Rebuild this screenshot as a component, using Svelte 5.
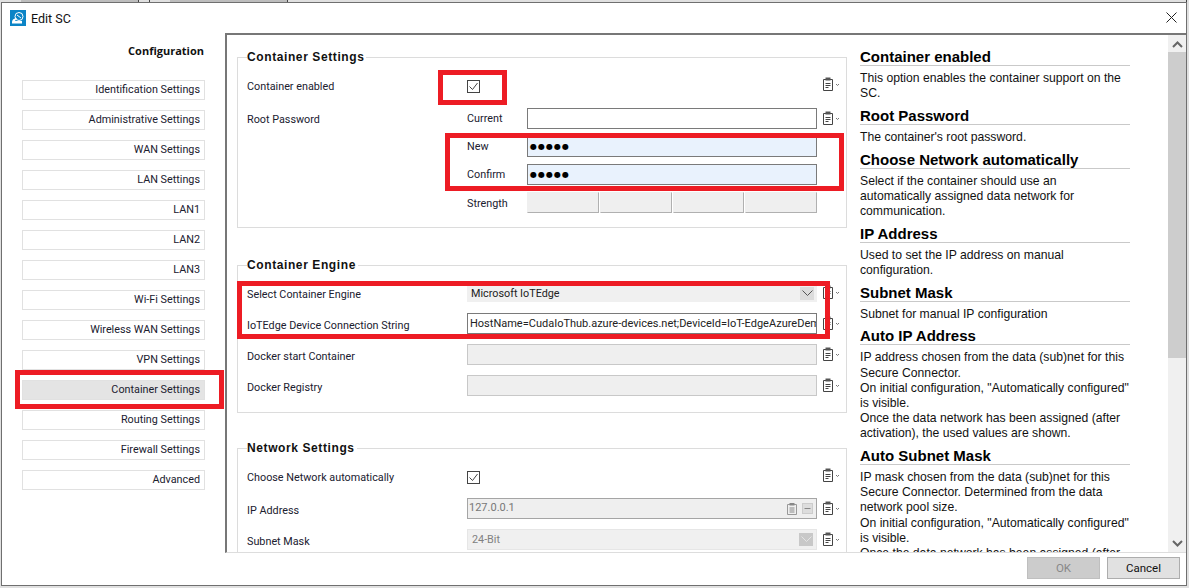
<script lang="ts">
	const navItems = [
		'Identification Settings',
		'Administrative Settings',
		'WAN Settings',
		'LAN Settings',
		'LAN1',
		'LAN2',
		'LAN3',
		'Wi-Fi Settings',
		'Wireless WAN Settings',
		'VPN Settings',
		'Container Settings',
		'Routing Settings',
		'Firewall Settings',
		'Advanced'
	];
	const active = 'Container Settings';

	const help = [
		{ title: 'Container enabled', lines: ['This option enables the container support on the', 'SC.'] },
		{ title: 'Root Password', lines: ["The container's root password."] },
		{
			title: 'Choose Network automatically',
			lines: ['Select if the container should use an', 'automatically assigned data network for', 'communication.']
		},
		{ title: 'IP Address', lines: ['Used to set the IP address on manual', 'configuration.'] },
		{ title: 'Subnet Mask', lines: ['Subnet for manual IP configuration'] },
		{
			title: 'Auto IP Address',
			lines: [
				'IP address chosen from the data (sub)net for this',
				'Secure Connector.',
				'On initial configuration, "Automatically configured"',
				'is visible.',
				'Once the data network has been assigned (after',
				'activation), the used values are shown.'
			]
		},
		{
			title: 'Auto Subnet Mask',
			lines: [
				'IP mask chosen from the data (sub)net for this',
				'Secure Connector. Determined from the data',
				'network pool size.',
				'On initial configuration, "Automatically configured"',
				'is visible.',
				'Once the data network has been assigned (after'
			]
		}
	];
</script>

{#snippet clip()}
	<svg class="clip" width="17" height="14" viewBox="0 0 17 14">
		<path d="M0.500 2.500h9v11h-9z" fill="none" stroke="#444" />
		<path d="M2.500 0.500h5v3h-5z" fill="#555" />
		<path d="M2.500 6.500h5M2.500 8.500h5M2.500 10.500h3" stroke="#444" />
		<path d="M13 7l1.500 1.500L16 7" fill="none" stroke="#777" />
	</svg>
{/snippet}

{#snippet check()}
	<svg class="check" width="13" height="13" viewBox="0 0 13 13">
		<rect x="0.500" y="0.500" width="12" height="12" fill="#fff" stroke="#444" />
		<path d="M2.500 6.500l3 3 5-6.500" fill="none" stroke="#444" />
	</svg>
{/snippet}

<div class="backdrop">
	<div class="strip">
		<i class="s-a"></i><i class="s-b"></i><i class="s-a"></i><i class="s-c"></i>
	</div>
	<div class="window">
		<header class="titlebar">
			<svg class="logo" width="16" height="16" viewBox="0 0 16 16">
				<rect width="16" height="16" fill="#0b84c6" />
				<circle cx="9" cy="6.500" r="4" fill="none" stroke="#fff" />
				<path d="M7 5l4 3" stroke="#fff" />
				<path d="M2 12q0-3 4-4h1l-2 3h7v2.500H2z" fill="#fff" />
			</svg>
			<span class="title">Edit SC</span>
			<svg class="close" width="11" height="11" viewBox="0 0 11 11">
				<path d="M0.500 0.500l10 10M10.500 0.500l-10 10" stroke="#222" />
			</svg>
		</header>

		<div class="body">
			<nav class="sidebar">
				<h2>Configuration</h2>
				<ul>
					{#each navItems as item}
						<li class:active={item === active}>{item}</li>
					{/each}
				</ul>
			</nav>

			<div class="panel">
				<main class="form">
					<fieldset class="group g1">
						<legend>Container Settings</legend>
						<div class="row r-enabled">
							<span class="label">Container enabled</span>
							<span class="control">{@render check()}</span>
							{@render clip()}
						</div>
						<div class="row r-pw">
							<span class="label nudge">Root Password</span>
							<span class="sub">Current</span>
							<span class="input short"></span>
							{@render clip()}
						</div>
						<div class="row r-pw">
							<span class="label"></span>
							<span class="sub">New</span>
							<span class="input short filled">●●●●●</span>
						</div>
						<div class="row r-pw">
							<span class="label"></span>
							<span class="sub">Confirm</span>
							<span class="input short filled">●●●●●</span>
						</div>
						<div class="row r-pw">
							<span class="label"></span>
							<span class="sub nudge">Strength</span>
							<span class="meter"><i></i><i></i><i></i><i></i></span>
						</div>
					</fieldset>

					<fieldset class="group g2">
						<legend>Container Engine</legend>
						<div class="row r-field">
							<span class="label">Select Container Engine</span>
							<span class="select">
								<span>Microsoft IoTEdge</span>
								<b class="arrow">
									<svg width="11" height="7" viewBox="0 0 11 7"><path d="M0.500 0.500l5 5 5-5" fill="none" stroke="#555" /></svg>
								</b>
							</span>
							{@render clip()}
						</div>
						<div class="row r-field">
							<span class="label">IoTEdge Device Connection String</span>
							<span class="input wide">HostName=CudaIoThub.azure-devices.net;DeviceId=IoT-EdgeAzureDemo</span>
							{@render clip()}
						</div>
						<div class="row r-field">
							<span class="label">Docker start Container</span>
							<span class="input wide off"></span>
							{@render clip()}
						</div>
						<div class="row r-field">
							<span class="label">Docker Registry</span>
							<span class="input wide off"></span>
							{@render clip()}
						</div>
					</fieldset>

					<fieldset class="group g3">
						<legend>Network Settings</legend>
						<div class="row r-enabled">
							<span class="label">Choose Network automatically</span>
							<span class="control">{@render check()}</span>
							{@render clip()}
						</div>
						<div class="row r-field r-ip">
							<span class="label">IP Address</span>
							<span class="input wide off dark">
								127.0.0.1
								<span class="mini">
									<svg width="10" height="13" viewBox="0 0 10 13">
										<path d="M0.500 2.500h9v10h-9z" fill="none" stroke="#999" />
										<path d="M2.500 1h5v2.500h-5z" fill="#888" />
										<path d="M2.500 6h5M2.500 8h5M2.500 10h5" stroke="#888" />
									</svg>
									<svg width="11" height="11" viewBox="0 0 11 11">
										<rect x="0.500" y="0.500" width="10" height="10" fill="#ddd" stroke="#ccc" />
										<path d="M2.500 5.500h6" stroke="#888" />
									</svg>
								</span>
							</span>
							{@render clip()}
						</div>
						<div class="row r-field">
							<span class="label">Subnet Mask</span>
							<span class="select off">
								<span>24-Bit</span>
								<b class="arrow">
									<svg width="11" height="7" viewBox="0 0 11 7"><path d="M0.500 0.500l5 5 5-5" fill="none" stroke="#e4e4e4" /></svg>
								</b>
							</span>
							{@render clip()}
						</div>
					</fieldset>
				</main>

				<aside class="help">
					{#each help as h}
						<h3>{h.title}</h3>
						<p>
							{#each h.lines as line}
								<span>{line}</span>
							{/each}
						</p>
					{/each}
				</aside>

				<div class="scrollbar">
					<svg width="11" height="7" viewBox="0 0 11 7"><path d="M1 6l4.500-4.500L10 6" fill="none" stroke="#666" stroke-width="2" /></svg>
					<div class="thumb"></div>
					<svg width="11" height="7" viewBox="0 0 11 7"><path d="M1 1l4.500 4.500L10 1" fill="none" stroke="#666" stroke-width="2" /></svg>
				</div>
			</div>
		</div>

		<footer class="footer">
			<button class="btn" disabled>OK</button>
			<button class="btn">Cancel</button>
		</footer>

		<!-- red annotation boxes drawn over the screenshot -->
		<div class="mark m1"></div>
		<div class="mark m2"></div>
		<div class="mark m3"></div>
		<div class="mark m4"></div>
	</div>
</div>

<style>
	:global(body) {
		margin: 0;
		background: #fff;
	}
	.backdrop {
		width: 1189px;
		height: 588px;
		padding: 0 2px 2px 1px;
		box-sizing: border-box;
		background: #e0e0e0;
		overflow: hidden;
	}
	.strip {
		height: 2px;
		display: flex;
	}
	.strip i {
		display: block;
		border-right: 1px solid #444;
	}
	.s-a {
		width: 117px;
		margin-left: 20px;
		background: #bdbdbd;
	}
	.s-b {
		width: 10px;
	}
	.s-c {
		flex: 1;
		background: #e0e0e0;
	}
	.window {
		position: relative;
		height: 584px;
		box-sizing: border-box;
		border: 1px solid #6f6f6f;
		background: #fff;
		display: flex;
		flex-direction: column;
		font-family: Roboto, sans-serif;
		font-size: 10.800px;
		color: #20202f;
	}
	.titlebar {
		height: 30px;
		flex: none;
		display: flex;
		align-items: center;
		padding-left: 8px;
	}
	.title {
		margin-left: 5px;
		font-size: 12.500px;
		color: #111;
	}
	.close {
		margin-left: auto;
		margin-right: 9px;
		margin-top: -2px;
	}
	.body {
		height: 520px;
		flex: none;
		display: flex;
	}
	.sidebar {
		width: 223px;
		flex: none;
	}
	.sidebar h2 {
		margin: 10px 21px 0 0;
		font-family: 'Open Sans', sans-serif;
		font-size: 11px;
		font-weight: 700;
		text-align: right;
		color: #111;
	}
	.sidebar ul {
		list-style: none;
		margin: 22px 0 0 20px;
		padding: 0;
		width: 183px;
	}
	.sidebar li {
		height: 20px;
		margin-bottom: 10px;
		box-sizing: border-box;
		border: 1px solid #e1e1e1;
		padding-right: 4px;
		text-align: right;
		line-height: 18px;
	}
	.sidebar li.active {
		background: #e4e4e4;
	}
	.panel {
		flex: 1;
		display: flex;
		overflow: hidden;
		border-top: 2px solid #777;
		border-left: 2px solid #777;
		border-bottom: 1px solid #ddd;
	}
	.form {
		width: 623px;
		flex: none;
		box-sizing: border-box;
		padding: 15px 0 0 10px;
		overflow: hidden;
	}
	.group {
		margin: 0 3px 0 0;
		padding: 0 0 0 9px;
		border: 1px solid #dcdcdc;
		min-width: 0;
	}
	.group legend {
		padding: 0 2px 0 0;
		font-family: 'Liberation Sans', sans-serif;
		font-size: 12px;
		font-weight: 700;
		letter-spacing: 0.6px;
		color: #111;
		line-height: 14px;
	}
	.g1 {
		height: 176px;
	}
	.g2 {
		margin-top: 30px;
		height: 153px;
	}
	.g3 {
		margin-top: 28px;
		height: 140px;
	}
	.row {
		display: flex;
		align-items: center;
		height: 21px;
	}
	.r-enabled {
		height: 22px;
		margin-top: 11px;
	}
	.r-enabled .clip {
		margin-top: -5px;
	}
	.r-pw {
		margin-top: 7px;
	}
	.r-enabled + .r-pw {
		margin-top: 11px;
	}
	.r-field {
		margin-top: 10px;
	}
	.r-field .label {
		padding-top: 3px;
	}
	.nudge {
		padding-top: 1px;
	}
	.label {
		width: 220px;
		box-sizing: border-box;
		flex: none;
	}
	.sub {
		width: 60px;
		flex: none;
	}
	.control {
		width: 350px;
		flex: none;
		display: flex;
	}
	.check {
		display: block;
	}
	.clip {
		margin-left: 6px;
		margin-top: -2px;
		flex: none;
	}
	.input {
		height: 21px;
		box-sizing: border-box;
		border: 1px solid #7a7a7a;
		background: #fff;
		flex: none;
		display: flex;
		align-items: center;
		padding-left: 2px;
		overflow: hidden;
		white-space: nowrap;
		color: #222;
	}
	.input.short {
		width: 290px;
	}
	.input.filled {
		background: #e9f2fd;
		font-family: 'DejaVu Sans', sans-serif;
		font-size: 8px;
		letter-spacing: 1px;
		color: #000;
	}
	.input.wide {
		width: 350px;
		font-size: 11px;
	}
	.input.off {
		background: #efefef;
		border-color: #c8c8c8;
		color: #777;
	}
	.input.off.dark {
		border-color: #a5a5a5;
		padding-left: 1px;
		padding-bottom: 3px;
	}
	.mini {
		margin-left: auto;
		margin-bottom: -3px;
		display: flex;
		align-items: center;
		gap: 5px;
		padding-right: 3px;
	}
	.meter {
		width: 290px;
		height: 21px;
		flex: none;
		display: grid;
		grid-template-columns: repeat(4, 1fr);
		gap: 1px;
	}
	.meter i {
		background: #efefef;
		border: 1px solid #efefef;
		border-bottom-color: #b0b0b0;
		border-right-color: #b0b0b0;
		box-sizing: border-box;
	}
	.select {
		width: 350px;
		height: 18px;
		margin-top: 1px;
		flex: none;
		box-sizing: border-box;
		background: #f0f0f0;
		display: flex;
		align-items: center;
		justify-content: space-between;
		padding-left: 4px;
		padding-right: 3px;
		color: #222;
	}
	.select.off {
		height: 21px;
		margin-top: 0;
		border: 1px solid #e6e6e6;
		color: #808080;
	}
	.arrow {
		width: 14px;
		height: 13px;
		display: flex;
		align-items: center;
		justify-content: center;
		background: #dcdcdc;
	}
	.select.off .arrow {
		background: #c8c8c8;
	}
	.help {
		width: 318px;
		flex: none;
		box-sizing: border-box;
		padding: 6px 0 0 10px;
		overflow: hidden;
		font-family: 'Liberation Sans', sans-serif;
		font-size: 12.200px;
		color: #111;
	}
	.help h3 {
		margin: 0;
		width: 270px;
		font-size: 15px;
		font-weight: 700;
		line-height: 16px;
		padding-top: 6.500px;
		border-bottom: 1px solid #c9c9c9;
		color: #000;
	}
	.help h3:first-child {
		padding-top: 8px;
	}
	.help p {
		margin: 5px 0 0;
		line-height: 15.200px;
	}
	.help p span {
		display: block;
		white-space: nowrap;
	}
	.scrollbar {
		width: 18px;
		flex: none;
		background: #f0f0f0;
		display: flex;
		flex-direction: column;
		align-items: center;
		justify-content: space-between;
		padding: 6px 0 5px;
		box-sizing: border-box;
	}
	.thumb {
		width: 100%;
		flex: 1;
		margin: 4px 0 182px;
		background: #cdcdcd;
	}
	.footer {
		flex: 1;
		display: flex;
		justify-content: flex-end;
		align-items: center;
		gap: 7px;
		padding: 0 6px 2px 0;
	}
	.btn {
		width: 73px;
		height: 22px;
		padding: 0;
		border: 1px solid #adadad;
		background: #e1e1e1;
		font-family: Roboto, sans-serif;
		font-size: 11.500px;
		color: #111;
	}
	.btn:disabled {
		background: #ccc;
		border-color: #bfbfbf;
		color: #888;
	}
	.mark {
		position: absolute;
		box-sizing: border-box;
		border: 5px solid #ed1c24;
		pointer-events: none;
	}
	.m1 {
		left: 436px;
		top: 67px;
		width: 69px;
		height: 35px;
	}
	.m2 {
		left: 443px;
		top: 130px;
		width: 399px;
		height: 58px;
	}
	.m3 {
		left: 235px;
		top: 278px;
		width: 593px;
		height: 58px;
	}
	.m4 {
		left: 13px;
		top: 367px;
		width: 209px;
		height: 39px;
	}
</style>
